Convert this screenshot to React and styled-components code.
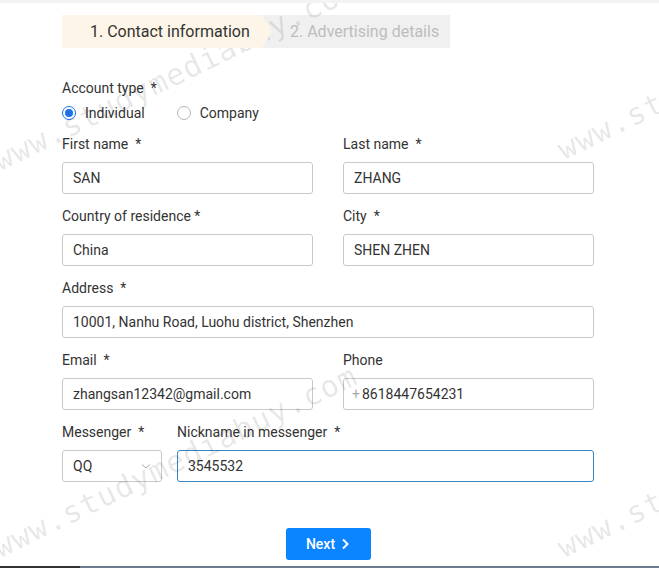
import React from 'react';
import styled, { createGlobalStyle } from 'styled-components';

const GlobalStyle = createGlobalStyle`
  html, body {
    margin: 0;
    padding: 0;
    background: #fff;
  }
  body {
    font-family: Roboto, "Noto Sans", Arial, sans-serif;
    color: #333;
  }
`;

const Page = styled.div`
  position: relative;
  height: 568px;
  overflow: hidden;
  display: flex;
  flex-direction: column;
  border-top: 3px solid #f3f3f5;
  box-sizing: border-box;
`;

const Content = styled.div`
  width: 532px;
  margin-left: 62px;
  padding-top: 12px;
`;

// step indicator
const Steps = styled.div`
  display: flex;
  height: 33px;
  margin-bottom: 30px;
`;

const Step = styled.div`
  display: flex;
  align-items: center;
  font-size: 16px;
  box-sizing: border-box;
  white-space: nowrap;
  color: ${(p) => (p.$active ? '#333' : '#bdbdbd')};
  background: ${(p) => (p.$active ? '#fdf6e8' : '#f0f0f0')};
  ${(p) =>
    p.$active
      ? `
    width: 210px;
    padding-left: 28px;
    position: relative;
    z-index: 1;
    clip-path: polygon(0 0, calc(100% - 10px) 0, 100% 50%, calc(100% - 10px) 100%, 0 100%);
  `
      : `
    width: 188px;
    margin-left: -10px;
    padding-left: 28px;
  `}
`;

const Label = styled.div`
  font-size: 14px;
  line-height: 20px;
  height: 20px;
  margin-bottom: ${(p) => p.$mb || 8}px;
  white-space: pre;
`;

const RadioRow = styled.div`
  display: flex;
  align-items: center;
  height: 20px;
  gap: 32px;
  margin-bottom: 11px;
`;

const RadioOption = styled.label`
  display: flex;
  align-items: center;
  gap: 9px;
  font-size: 14px;
`;

const RadioCircle = styled.span`
  width: 14px;
  height: 14px;
  border-radius: 50%;
  box-sizing: border-box;
  border: 1px solid ${(p) => (p.$checked ? '#1a73e8' : '#b5b5b5')};
  display: flex;
  align-items: center;
  justify-content: center;

  &::after {
    content: '';
    width: 8px;
    height: 8px;
    border-radius: 50%;
    background: ${(p) => (p.$checked ? '#1a73e8' : 'transparent')};
  }
`;

const Row = styled.div`
  display: grid;
  grid-template-columns: ${(p) => p.$cols || '251px 251px'};
  column-gap: ${(p) => p.$gap || 30}px;
  margin-bottom: 12px;
`;

const Field = styled.div`
  display: flex;
  flex-direction: column;
`;

const Input = styled.div`
  height: 32px;
  box-sizing: border-box;
  border: 1px solid ${(p) => (p.$focused ? '#3a86c0' : '#c9c9c9')};
  border-radius: 3px;
  padding: 0 10px;
  display: flex;
  align-items: center;
  justify-content: space-between;
  font-size: 14px;
  color: #333;
  background: #fff;
`;

const Plus = styled.span`
  color: #aaa;
  margin-left: -2px;
  margin-right: 2px;
`;

const Chevron = styled.svg`
  width: 10px;
  height: 10px;
`;

const Actions = styled.div`
  display: flex;
  justify-content: center;
  margin-top: 46px;
`;

const NextButton = styled.button`
  width: 85px;
  height: 32px;
  border: none;
  border-radius: 3px;
  background: #0a84ff;
  color: #fff;
  font-family: Roboto, Arial, sans-serif;
  font-size: 14px;
  font-weight: 500;
  display: flex;
  align-items: center;
  justify-content: center;
  gap: 6px;
  cursor: pointer;
`;

const BottomLine = styled.div`
  margin-top: auto;
  height: 2px;
  background: linear-gradient(to right, #333 0, #333 80px, #6b7d8f 80px, #6b7d8f 100%);
`;

// faint "www.studymediabuy.com" overlays
const Watermark = styled.span`
  position: absolute;
  left: ${(p) => p.$x}px;
  top: ${(p) => p.$y}px;
  font-family: "DejaVu Sans Mono", "Liberation Mono", monospace;
  font-size: 30px;
  line-height: 30px;
  color: rgba(0, 0, 0, 0.1);
  transform-origin: 0 100%;
  transform: rotate(-26deg);
  white-space: nowrap;
  pointer-events: none;
  letter-spacing: 1px;
`;

const TextField = ({ label, value, focused, mb }) => (
  <Field>
    <Label $mb={mb}>{label}</Label>
    <Input $focused={focused}>{value}</Input>
  </Field>
);

const App = () => {
  return (
    <Page>
      <GlobalStyle />
      <Content>
        <Steps>
          <Step $active>1. Contact information</Step>
          <Step>2. Advertising details</Step>
        </Steps>

        <Label $mb={5}>{'Account type  *'}</Label>
        <RadioRow>
          <RadioOption>
            <RadioCircle $checked />
            Individual
          </RadioOption>
          <RadioOption>
            <RadioCircle />
            Company
          </RadioOption>
        </RadioRow>

        <Row>
          <TextField label="First name  *" value="SAN" />
          <TextField label="Last name  *" value="ZHANG" />
        </Row>
        <Row>
          <TextField label="Country of residence *" value="China" />
          <TextField label="City  *" value="SHEN ZHEN" />
        </Row>
        <Row $cols="532px">
          <TextField label="Address  *" value="10001, Nanhu Road, Luohu district, Shenzhen" />
        </Row>
        <Row>
          <TextField label="Email  *" value="zhangsan12342@gmail.com" />
          <Field>
            <Label>Phone</Label>
            <Input>
              <span>
                <Plus>+</Plus>8618447654231
              </span>
            </Input>
          </Field>
        </Row>
        <Row $cols="100px 417px" $gap={15}>
          <Field>
            <Label>{'Messenger  *'}</Label>
            <Input>
              QQ
              <Chevron viewBox="0 0 10 10">
                <path d="M1 3.5 L5 7 L9 3.5" fill="none" stroke="#aaa" strokeWidth="1" />
              </Chevron>
            </Input>
          </Field>
          <TextField label="Nickname in messenger  *" value="3545532" focused />
        </Row>

        <Actions>
          <NextButton>
            Next
            <svg width="9" height="12" viewBox="0 0 9 12">
              <path d="M2 1.5 L6.5 6 L2 10.5" fill="none" stroke="#fff" strokeWidth="2" />
            </svg>
          </NextButton>
        </Actions>
      </Content>
      <BottomLine />

      <Watermark $x={2} $y={143}>www.studymediabuy.com</Watermark>
      <Watermark $x={2} $y={530}>www.studymediabuy.com</Watermark>
      <Watermark $x={566} $y={132}>www.studymediabuy.com</Watermark>
      <Watermark $x={566} $y={530}>www.studymediabuy.com</Watermark>
    </Page>
  );
};

export default App;
